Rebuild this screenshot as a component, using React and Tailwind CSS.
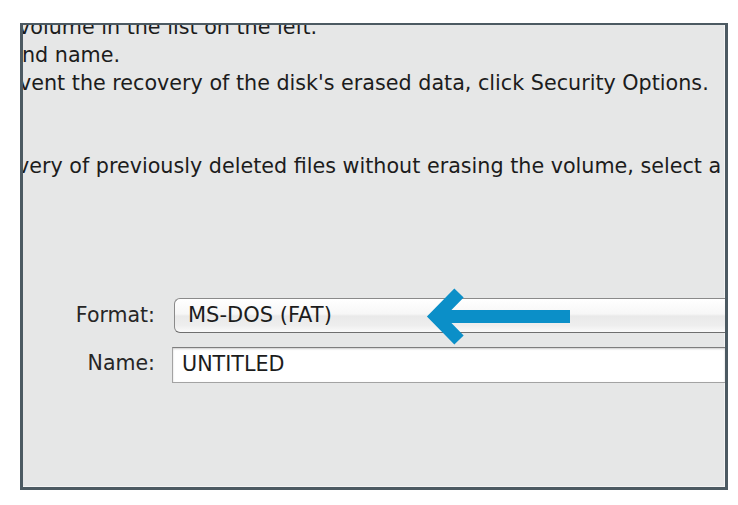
import React from "react";

// one line of the help text, cut off by the panel edges like the screenshot
const Line = ({ hidden, shown, rest = "", className = "" }) => (
  <div className={`flex whitespace-nowrap h-[28px] leading-[28px] ${className}`}>
    <span className="flex w-0 justify-end">{hidden}</span>
    <span>{shown}{rest}</span>
  </div>
);

const Arrow = () => (
  <svg
    className="absolute left-[397px] top-[260px] pointer-events-none"
    width="155"
    height="63"
    viewBox="0 0 155 63"
  >
    <line x1="18" y1="31.5" x2="150" y2="31.5" stroke="#0b8fc8" strokeWidth="13" />
    <polyline
      points="39,8 16,31.5 39,55"
      fill="none"
      stroke="#0b8fc8"
      strokeWidth="13"
      strokeLinejoin="miter"
    />
  </svg>
);

export default function App() {
  return (
    <div className="w-[738px] h-[505px] bg-white pt-[23px] pl-[20px] font-['DejaVu_Sans',sans-serif]">
      <div className="relative w-[708px] h-[467px] overflow-hidden bg-[#e6e7e7] border-[#4c5a62] border-t-2 border-l-[3px] border-r-[3px] border-b-[3px] shadow-[inset_-1px_-1px_0_#f4f4f4]">
        <div className="text-[20.7px] text-[#1c1c1c]">
          <Line className="-mt-[12px] -ml-[5px]" hidden="1) Select the disk or " shown="volume in the list on the left." />
          <Line className="-ml-[1px]" hidden="2) Specify a format a" shown="nd name." />
          <Line className="-ml-[4px]" hidden="3) If you want to pre" shown="vent the recovery of the disk's erased data, click Security Options." />
          <Line
            className="mt-[55px] -ml-[6px]"
            hidden="To prevent the reco"
            shown="very of previously deleted files without erasing the volume, select a"
            rest=" volume in the list on the left, and click Erase Free Space."
          />
        </div>

        <div className="mt-[118px] flex flex-col gap-[14px]">
          <div className="flex items-center">
            <span className="w-[132px] text-right text-[20.5px] text-[#262626]">Format:</span>
            <div className="ml-[19px] flex-1 h-[35px] flex items-center pl-[13px] rounded-l-[6px] border border-r-0 border-[#8a8a8a] border-b-[#6f6f6f] bg-[linear-gradient(to_bottom,#ffffff_0%,#f7f7f7_45%,#e9e9e9_52%,#eeeeee_80%,#fafafa_100%)] text-[21px] text-[#1c1c1c] whitespace-nowrap">
              MS-DOS (FAT)
            </div>
          </div>
          <div className="flex items-center">
            <span className="w-[132px] text-right text-[20.5px] text-[#262626] -mt-[4px]">Name:</span>
            <div className="ml-[17px] flex-1 h-[36px] flex items-center pl-[9px] border border-r-0 border-[#a3a3a3] border-t-[#7e7e7e] bg-white shadow-[inset_0_1px_2px_rgba(0,0,0,0.2)] text-[20.7px] text-[#1c1c1c] whitespace-nowrap">
              UNTITLED
            </div>
          </div>
        </div>

        <Arrow />
      </div>
    </div>
  );
}
